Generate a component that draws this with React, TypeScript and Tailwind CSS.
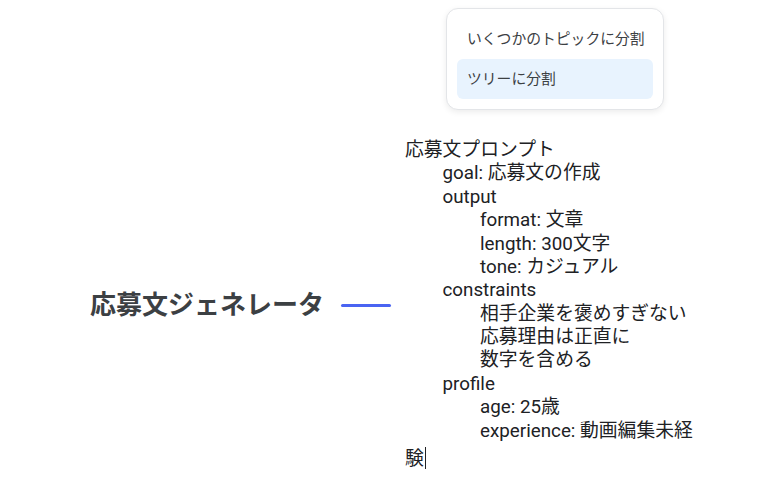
import React from "react";

const PROMPT_TEXT = `応募文プロンプト
\tgoal: 応募文の作成
\toutput
\t\tformat: 文章
\t\tlength: 300文字
\t\ttone: カジュアル
\tconstraints
\t\t相手企業を褒めすぎない
\t\t応募理由は正直に
\t\t数字を含める
\tprofile
\t\tage: 25歳
\t\texperience: 動画編集未経験`;

function SplitMenu() {
    return (
        <div className="absolute left-[446px] top-[8px] w-[218px] rounded-xl border border-[#e3e5e8] bg-white p-[10px] shadow-[0_2px_6px_rgba(0,0,0,0.08)]">
            <div className="flex h-[40px] items-center whitespace-nowrap rounded-md px-[10px] text-[14.8px] text-[#3c4043]">
                いくつかのトピックに分割
            </div>
            <div className="flex h-[40px] items-center whitespace-nowrap rounded-md bg-[#e8f3fe] px-[10px] text-[14.8px] text-[#3c4043]">
                ツリーに分割
            </div>
        </div>
    );
}

export default function App() {
    return (
        <div className="relative h-[483px] w-[761px] overflow-hidden bg-white font-['Roboto','Noto_Sans_CJK_JP',sans-serif]">
            <div className="flex items-center pl-[90px] pt-[139px]">
                <div className="font-['Inter','Noto_Sans_CJK_JP',sans-serif] text-[26px] font-bold leading-none text-[#3c4043]">
                    応募文ジェネレータ
                </div>
                <div className="ml-[17px] h-[3px] w-[50px] rounded-full bg-[#4a64f2]" />
                <div className="ml-[14px] w-[300px] whitespace-pre-wrap text-[18.8px] leading-[23.37px] text-[#202124] [tab-size:37.5px]">
                    {PROMPT_TEXT}
                    <span className="ml-[1px] inline-block h-[22px] w-[1.5px] translate-y-[4px] bg-[#202124]" />
                </div>
            </div>
            <SplitMenu />
        </div>
    );
}
